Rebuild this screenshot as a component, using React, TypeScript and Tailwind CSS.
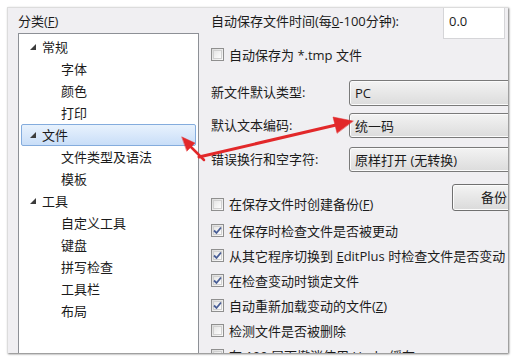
import React from "react"

const font = { fontFamily: '"Open Sans", "Noto Sans CJK SC", sans-serif' }

type TreeItem = { label: string; level: 0 | 1; selected?: boolean }

const tree: TreeItem[] = [
  { label: "常规", level: 0 },
  { label: "字体", level: 1 },
  { label: "颜色", level: 1 },
  { label: "打印", level: 1 },
  { label: "文件", level: 0, selected: true },
  { label: "文件类型及语法", level: 1 },
  { label: "模板", level: 1 },
  { label: "工具", level: 0 },
  { label: "自定义工具", level: 1 },
  { label: "键盘", level: 1 },
  { label: "拼写检查", level: 1 },
  { label: "工具栏", level: 1 },
  { label: "布局", level: 1 },
]

function Expander() {
  return (
    <svg width="6" height="6" viewBox="0 0 6 6" className="shrink-0">
      <polygon points="6,0 6,6 0,6" fill="#3c3c3c" />
    </svg>
  )
}

function CheckBox({ checked }: { checked?: boolean }) {
  return (
    <span className="relative flex h-[13px] w-[13px] shrink-0 items-center justify-center border border-[#8f8f8f] bg-gradient-to-br from-[#dcdcdc] to-[#fbfbfb]">
      <span className="absolute inset-[1px] border border-[#d0d0d0] bg-gradient-to-br from-[#e6e6e6] to-[#fdfdfd]" />
      {checked && (
        <svg width="9" height="9" viewBox="0 0 9 9" className="relative">
          <path d="M1 4.5 L3.5 7 L8 1.5" fill="none" stroke="#4a5f97" strokeWidth="1.8" />
        </svg>
      )}
    </span>
  )
}

function CheckRow({ checked, children, className = "" }: { checked?: boolean; children: React.ReactNode; className?: string }) {
  return (
    <div className={"flex shrink-0 items-center gap-[5px] whitespace-nowrap " + className}>
      <CheckBox checked={checked} />
      <span className="leading-[16px]">{children}</span>
    </div>
  )
}

function Combo({ value }: { value: string }) {
  return (
    <div className="flex h-full w-[180px] shrink-0 items-center rounded-[3px] border border-[#7a7a7a] bg-gradient-to-b from-[#f3f3f3] to-[#dcdcdc] pl-[5px] leading-[16px] shadow-[inset_0_0_0_1px_#fbfbfb]">
      {value}
    </div>
  )
}

export default function App() {
  return (
    <div className="h-[362px] w-[516px] bg-white p-[7px] text-[13px] text-[#1b1b1b]" style={font}>
      <div className="flex h-[346px] w-[501px] overflow-hidden border-t border-l border-[#dcdcdc] bg-[#f0eff2] shadow-[1px_1px_2px_rgba(0,0,0,0.55)]">
        {/* left: category tree */}
        <div className="flex w-[192px] shrink-0 flex-col pl-[10px] pt-[5px]">
          <div className="h-[17px] shrink-0 leading-[17px]">
            分类(<u>F</u>)
          </div>
          <div className="mt-[3px] h-[340px] w-[181px] shrink-0 border border-[#8d9096] bg-white pt-[2px]">
            {tree.map((item) =>
              item.selected ? (
                <div
                  key={item.label}
                  className="mx-[2px] flex h-[22px] items-center gap-[6px] rounded-[2px] border border-[#84acdd] bg-gradient-to-b from-[#e8f2fd] to-[#c9def8] pl-[8px]"
                >
                  <Expander />
                  <span className="leading-[16px]">{item.label}</span>
                </div>
              ) : item.level === 0 ? (
                <div key={item.label} className="flex h-[22px] items-center gap-[6px] pl-[11px]">
                  <Expander />
                  <span className="leading-[16px]">{item.label}</span>
                </div>
              ) : (
                <div key={item.label} className="flex h-[22px] items-center pl-[42px] leading-[16px]">
                  {item.label}
                </div>
              )
            )}
          </div>
        </div>

        {/* right: file options */}
        <div className="ml-[11px] flex min-w-0 flex-1 flex-col">
          <div className="flex h-[31px] shrink-0 items-start justify-between">
            <span className="whitespace-nowrap pt-[4px] leading-[18px]">
              自动保存文件时间(每<u>0</u>-100分钟):
            </span>
            <div className="mr-[3px] mt-[-3px] flex h-[34px] w-[62px] items-center border border-[#d5d5d8] bg-white pl-[5px]">
              0.0
            </div>
          </div>
          <div className="flex h-[31px] shrink-0 items-center">
            <CheckRow>自动保存为 *.tmp 文件</CheckRow>
          </div>

          <div className="mt-[10px] flex h-[26px] shrink-0 items-center">
            <span className="w-[138px] shrink-0 whitespace-nowrap">新文件默认类型:</span>
            <Combo value="PC" />
          </div>
          <div className="mt-[7px] flex h-[25px] shrink-0 items-center">
            <span className="w-[138px] shrink-0 whitespace-nowrap">默认文本编码:</span>
            <Combo value="统一码" />
          </div>
          <div className="mt-[9px] flex h-[25px] shrink-0 items-center">
            <span className="w-[138px] shrink-0 whitespace-nowrap">错误换行和空字符:</span>
            <Combo value="原样打开 (无转换)" />
          </div>

          <div className="mt-[12px] flex h-[27px] shrink-0 items-start">
            <CheckRow className="mt-[13px] h-[14px] w-[241px]">
              在保存文件时创建备份(<u>F</u>)
            </CheckRow>
            <div className="flex h-[27px] w-[80px] shrink-0 items-center rounded-[3px] border border-[#707070] bg-gradient-to-b from-[#f4f4f4] to-[#dadada] pl-[28px] shadow-[inset_0_0_0_1px_#fcfcfc]">
              备份
            </div>
          </div>

          <div className="mt-[7px] flex shrink-0 flex-col">
            <CheckRow checked className="h-[25px]">在保存时检查文件是否被更动</CheckRow>
            <CheckRow checked className="h-[25px]">
              从其它程序切换到 <u>E</u>ditPlus 时检查文件是否变动
            </CheckRow>
            <CheckRow checked className="h-[25px]">在检查变动时锁定文件</CheckRow>
            <CheckRow checked className="h-[25px]">自动重新加载变动的文件(<u>Z</u>)</CheckRow>
            <CheckRow className="h-[25px]">检测文件是否被删除</CheckRow>
            <CheckRow className="h-[25px]">在 100 层下撤消使用 Undo 缓存</CheckRow>
          </div>
        </div>
      </div>

      {/* red annotation arrows */}
      <svg className="pointer-events-none absolute left-0 top-0" width="516" height="362">
        <g fill="#e2282a" stroke="#e2282a" strokeLinecap="round">
          <line x1="204" y1="160" x2="190" y2="146" strokeWidth="2.5" />
          <polygon points="182,137 195,143 187,151" strokeWidth="0.5" />
          <line x1="199" y1="157" x2="336" y2="125" strokeWidth="3" />
          <polygon points="353,121 333,117 337,133" strokeWidth="0.5" />
        </g>
      </svg>
    </div>
  )
}
